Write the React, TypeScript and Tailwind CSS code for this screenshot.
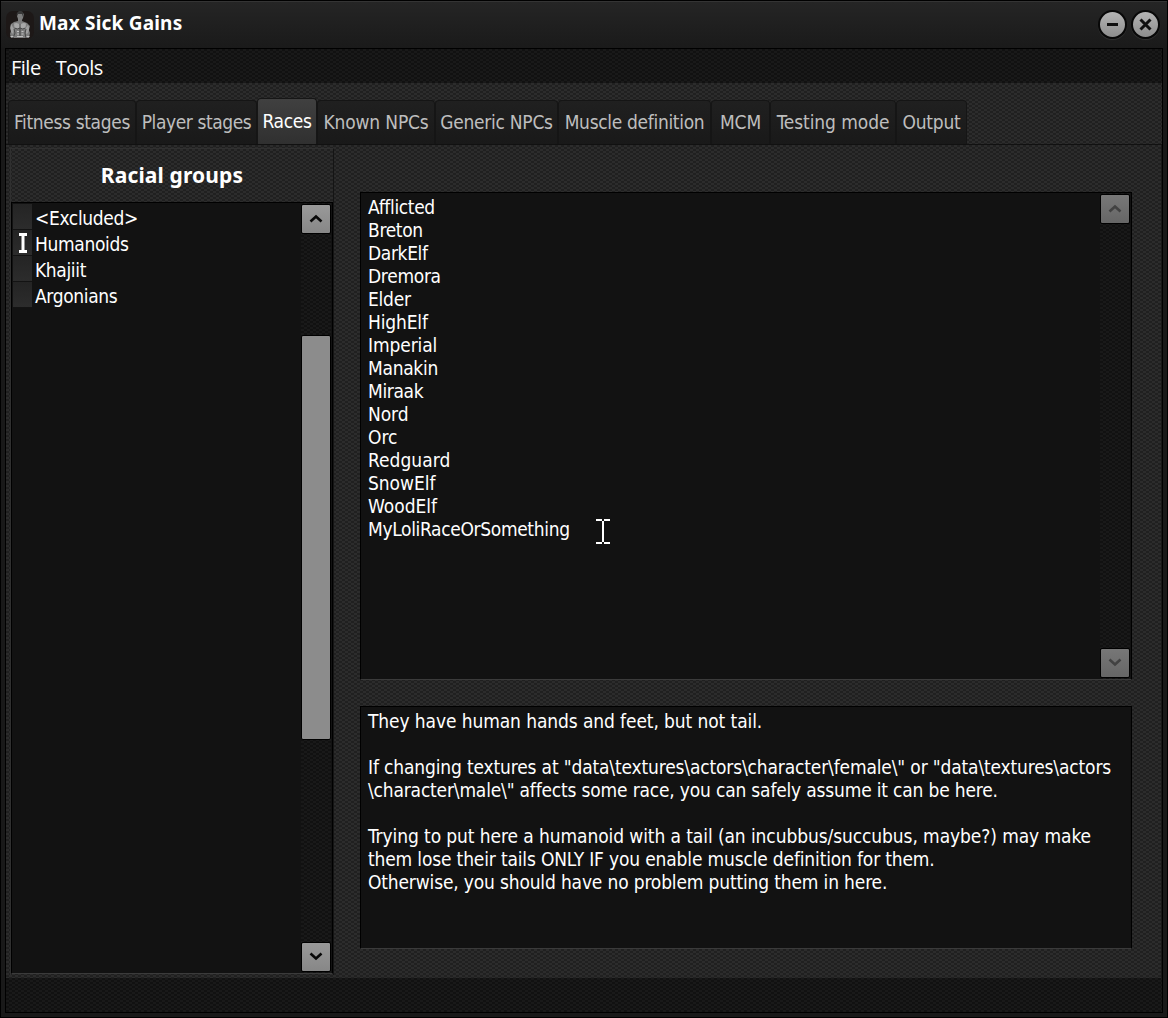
import React from 'react';

const weave = 'bg-[conic-gradient(#2c2c2c_25%,#202020_0_50%,#2c2c2c_0_75%,#202020_0)] bg-[length:6px_4px]';
const darkWeave = 'bg-[conic-gradient(#191919_25%,#111111_0_50%,#191919_0_75%,#111111_0)] bg-[length:6px_4px]';
const ui = "font-['DejaVu_Sans_Condensed','DejaVu_Sans',sans-serif] text-[19px]";

const tabs = [
  { label: 'Fitness stages', width: 'w-[128px]', spacing: 'tracking-[-0.35px]' },
  { label: 'Player stages', width: 'w-[121px]', spacing: 'tracking-[-0.42px]' },
  { label: 'Races', width: 'w-[60px]', spacing: 'tracking-[-0.35px]', active: true },
  { label: 'Known NPCs', width: 'w-[118px]', spacing: 'tracking-[-0.15px]' },
  { label: 'Generic NPCs', width: 'w-[123px]', spacing: 'tracking-[-0.27px]' },
  { label: 'Muscle definition', width: 'w-[153px]', spacing: 'tracking-[-0.32px]' },
  { label: 'MCM', width: 'w-[59px]', spacing: 'tracking-[-0.1px]' },
  { label: 'Testing mode', width: 'w-[126px]', spacing: 'tracking-[-0.08px]' },
  { label: 'Output', width: 'w-[71px]', spacing: 'tracking-[-0.25px]' },
];

const groups = ['<Excluded>', 'Humanoids', 'Khajiit', 'Argonians'];

const races = [
  { name: 'Afflicted', spacing: 'tracking-[-0.35px]' },
  { name: 'Breton', spacing: 'tracking-[-0.35px]' },
  { name: 'DarkElf', spacing: 'tracking-[-0.35px]' },
  { name: 'Dremora', spacing: 'tracking-[-0.3px]' },
  { name: 'Elder', spacing: 'tracking-[-0.25px]' },
  { name: 'HighElf', spacing: 'tracking-[-0.15px]' },
  { name: 'Imperial', spacing: 'tracking-[-0.1px]' },
  { name: 'Manakin', spacing: 'tracking-[-0.3px]' },
  { name: 'Miraak', spacing: 'tracking-[-0.35px]' },
  { name: 'Nord', spacing: 'tracking-[-0.1px]' },
  { name: 'Orc', spacing: 'tracking-[-0.05px]' },
  { name: 'Redguard', spacing: 'tracking-[0.03px]' },
  { name: 'SnowElf', spacing: 'tracking-[-0.05px]' },
  { name: 'WoodElf', spacing: 'tracking-[0px]' },
  { name: 'MyLoliRaceOrSomething', spacing: 'tracking-[-0.34px]' },
];

const help = [
  { text: 'They have human hands and feet, but not tail.', spacing: 'tracking-[-0.1px]' },
  { text: '', spacing: '' },
  { text: 'If changing textures at "data\\textures\\actors\\character\\female\\" or "data\\textures\\actors', spacing: 'tracking-[-0.15px]' },
  { text: '\\character\\male\\" affects some race, you can safely assume it can be here.', spacing: 'tracking-[-0.18px]' },
  { text: '', spacing: '' },
  { text: 'Trying to put here a humanoid with a tail (an incubbus/succubus, maybe?) may make', spacing: 'tracking-[-0.09px]' },
  { text: 'them lose their tails ONLY IF you enable muscle definition for them.', spacing: 'tracking-[-0.16px]' },
  { text: 'Otherwise, you should have no problem putting them in here.', spacing: 'tracking-[-0.16px]' },
];

function Arrow({ down = false, muted = false }: { down?: boolean; muted?: boolean }) {
  return (
    <div
      className={`flex h-[30px] w-[30px] items-center justify-center rounded-[2px] border border-black ${
        muted ? 'bg-linear-to-b from-[#777777] to-[#666666] text-[#424242]' : 'bg-linear-to-b from-[#999999] to-[#878787] text-[#080808]'
      }`}
    >
      <svg width="14" height="10" viewBox="0 0 14 10" fill="none" stroke="currentColor" strokeWidth="2.6">
        <path d={down ? 'M1.5 1.5 7 6.5l5.5-5' : 'M1.5 7.5 7 2.5l5.5 5'} />
      </svg>
    </div>
  );
}

function Torso() {
  return (
    <svg width="28" height="28" viewBox="0 0 28 28">
      <rect width="28" height="28" rx="7" fill="#1d1817" />
      <path d="M5 27 4 23l1-3-1-3 1-4 3-2 4-1V8l-1-3 1-3 3-1 3 2-1 4-1 2v1l5 2 3 3-1 4 1 3-1 5z" fill="#7d7d7d" />
      <path d="M11 5c-1-3 1-5 3.500-5S18 2 17 6l-1-3-4 0z" fill="#383838" />
      <path d="M8 12.500q3-1.500 6 1 3-2.500 6-1l-.5 4.500q-3 1.500-5.500-.5-2.500 2-5.500.5z" fill="#a8a8a8" />
      <path d="M5 13q-1 4 0 8l2 2 1-5zM22 14q2 3 0 8l-2 1-1-5z" fill="#a0a0a0" />
      <path d="M14 13v12M8.500 17q3 2 5.500 0 2.500 2 5.500 0M8 18l1 4-2 5M20 18l-1 4 1 5" fill="none" stroke="#474747" strokeWidth="1" />
      <path d="M11 20.500h2M15.500 20.500h2M11 23h2M15.500 23h2M11 25.500h6M4.500 25.500h3M20.500 25.500h3" stroke="#c0c0c0" strokeWidth="1.200" />
    </svg>
  );
}

function WindowButton({ close = false }: { close?: boolean }) {
  return (
    <div className="flex h-[29px] w-[29px] items-center justify-center rounded-full border-2 border-[#080808] bg-linear-to-b from-[#b4b4b4] to-[#8e8e8e] shadow-[0_1px_1px_#333]">
      <svg width="15" height="15" viewBox="0 0 15 15" fill="none" stroke="#101010" strokeWidth="3">
        <path d={close ? 'M2.500 2.500l10 10M12.500 2.500l-10 10' : 'M2 7.500h11'} />
      </svg>
    </div>
  );
}

export default function App() {
  return (
    <div className="flex h-[1018px] w-[1168px] flex-col overflow-hidden border border-black bg-[#191919] px-[4px] pb-[4px] text-white">
      <header className="-mx-[4px] flex h-[47px] shrink-0 items-center border-t border-[#343434] bg-linear-to-b from-[#252525] to-[#1a1a1a] pr-[7px] pl-[5px]">
        <Torso />
        <h1 className="ml-[5px] flex-1 pb-[3px] font-['Noto_Sans',sans-serif] text-[19px] font-bold tracking-[0.2px]">Max Sick Gains</h1>
        <div className="flex gap-[4px] pb-px">
          <WindowButton />
          <WindowButton close />
        </div>
      </header>

      <div className="flex min-h-0 flex-1 flex-col border border-black">
        <nav className={`flex h-[34px] shrink-0 items-center gap-[15px] pt-[3px] pl-[5px] font-['Open_Sans','Noto_Sans',sans-serif] text-[20px] tracking-[-0.5px] ${darkWeave}`}>
          <span>File</span>
          <span>Tools</span>
        </nav>

        <main className={`flex h-[895px] shrink-0 flex-col ${weave}`}>
          <div className={`flex h-[62px] shrink-0 items-end border-b border-[#111] pl-[2px] text-[#bebebe] ${ui}`}>
            {tabs.map((tab) => (
              <div
                key={tab.label}
                className={`flex shrink-0 items-center justify-center whitespace-nowrap rounded-t-[4px] border border-b-0 ${tab.width} ${tab.spacing} ${
                  tab.active
                    ? 'h-[46px] border-[#161616] bg-linear-to-b from-[#404040] to-[#303030] text-white'
                    : 'h-[44px] border-[#151515] bg-linear-to-b from-[#202020] to-[#191919]'
                }`}
              >
                {tab.label}
              </div>
            ))}
          </div>

          <div className="flex min-h-0 flex-1 pl-[4px]">
            <section className="mt-[3px] flex h-[827px] w-[324px] shrink-0 flex-col border-t border-r border-l border-t-[#303030] border-r-[#141414] border-l-[#303030]">
              <h2 className="flex h-[53px] shrink-0 items-center justify-center pt-px font-['Noto_Sans',sans-serif] text-[21px] font-bold tracking-[0.14px]">Racial groups</h2>
              <div className="flex h-[772px] shrink-0 border border-b-[#3b3b3b] border-t-black border-r-black border-l-black bg-[#121212]">
                <ul className={`flex-1 pt-px pl-px tracking-[-0.35px] ${ui}`}>
                  {groups.map((group) => (
                    <li key={group} className="flex h-[26px] items-center">
                      <span className="mr-[3px] flex h-[26px] w-[19px] items-center justify-center border-b border-[#131313] bg-linear-to-b from-[#242424] to-[#2c2c2c]">
                        {group === 'Humanoids' && (
                          <svg width="8" height="20" viewBox="0 0 8 20" fill="none" stroke="white" strokeWidth="3">
                            <path d="M0 1.500h8M4 1v18M0 18.500h8" />
                          </svg>
                        )}
                      </span>
                      <span className="pt-[3px]">{group}</span>
                    </li>
                  ))}
                </ul>
                <div className={`mr-px flex w-[30px] flex-col pt-px pb-px ${darkWeave}`}>
                  <Arrow />
                  <div className="mt-[101px] h-[405px] rounded-[2px] border border-black bg-[#8c8c8c]" />
                  <div className="mt-auto"><Arrow down /></div>
                </div>
              </div>
            </section>

            <section className="ml-[26px] flex w-[772px] shrink-0 flex-col pt-[47px]">
              <div className="relative flex h-[488px] border border-b-[#3b3b3b] border-t-black border-r-black border-l-black bg-[#121212]">
                <ul className={`flex-1 pt-[3px] pl-[7px] ${ui}`}>
                  {races.map((race) => <li key={race.name} className={`h-[23px] leading-[23px] ${race.spacing}`}>{race.name}</li>)}
                </ul>
                <svg className="absolute top-[326px] left-[235px]" width="14" height="25" viewBox="0 0 14 25" fill="none" stroke="white" strokeWidth="2">
                  <path d="M0 1h6M8 1h6M7 2v21M0 24h6M8 24h6" />
                </svg>
                <div className={`mr-px flex w-[30px] flex-col justify-between pt-px pb-px ${darkWeave}`}>
                  <Arrow muted />
                  <Arrow down muted />
                </div>
              </div>
              <div className={`mt-[26px] h-[243px] border border-b-[#3b3b3b] border-t-black border-r-black border-l-black bg-[#121212] pt-[3px] pl-[7px] ${ui}`}>
                {help.map((line, i) => (
                  <p key={i} className={`h-[23px] leading-[23px] whitespace-pre ${line.spacing}`}>{line.text}</p>
                ))}
              </div>
            </section>
            <div className="ml-auto w-px bg-[#171717]" />
          </div>
        </main>
        <footer className={`min-h-0 flex-1 ${darkWeave}`} />
      </div>
    </div>
  );
}
